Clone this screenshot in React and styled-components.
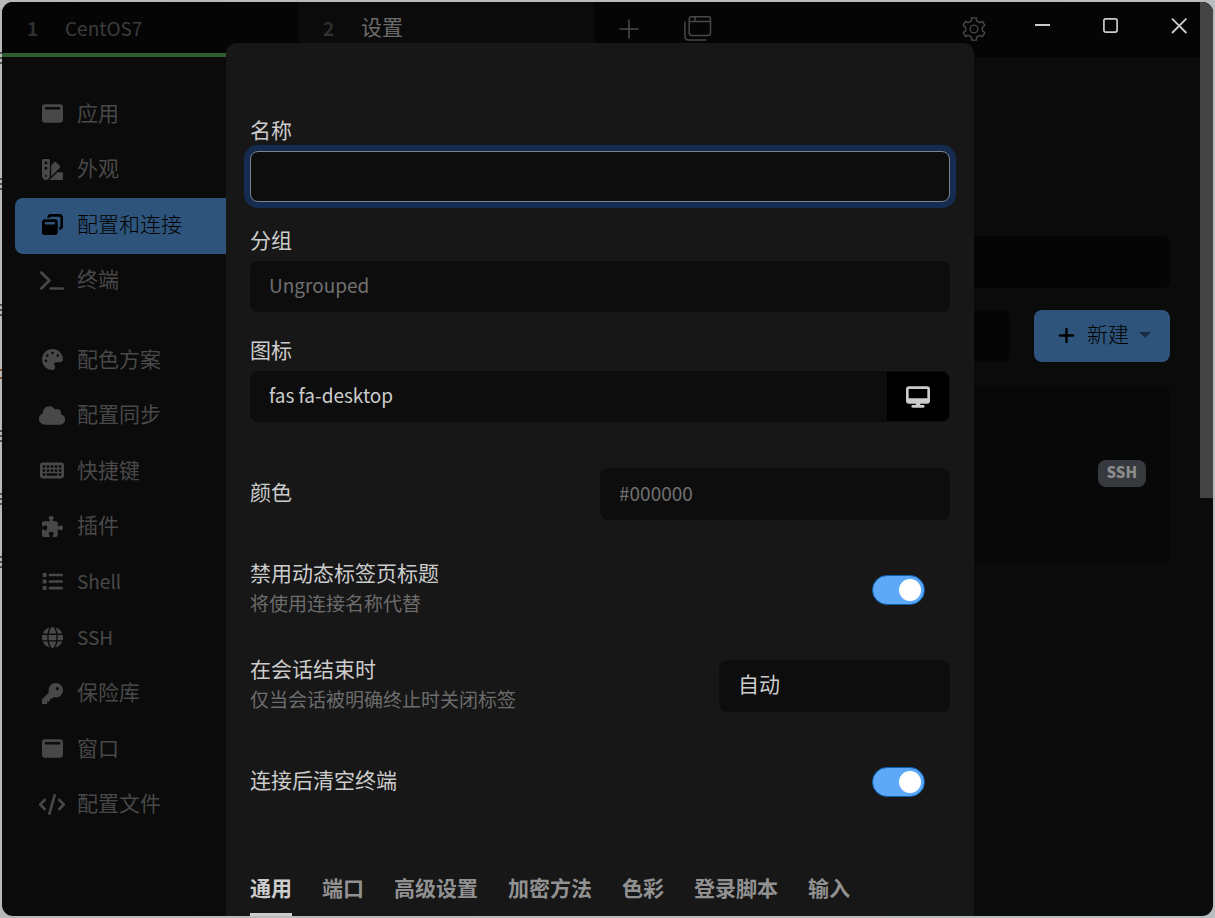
import React, { useState } from "react";
import styled, { createGlobalStyle, css } from "styled-components";
import {
  FaWindowMaximize,
  FaSwatchbook,
  FaWindowRestore,
  FaTerminal,
  FaPalette,
  FaCloud,
  FaKeyboard,
  FaPuzzlePiece,
  FaList,
  FaGlobe,
  FaKey,
  FaCode,
  FaDesktop,
  FaPlus,
} from "react-icons/fa6";

const GlobalStyle = createGlobalStyle`
  *, *::before, *::after { box-sizing: border-box; }
  body { margin: 0; }
  body, button, input, select {
    font-family: "Noto Sans CJK SC", "Noto Sans", sans-serif;
    font-size: 21px;
  }
  button { border: 0; padding: 0; background: none; cursor: pointer; }
`;

const edgeMarks = [52, 57, 62, 178, 183, 188, 304, 309, 314, 430, 435, 440, 493, 498, 503, 556, 561, 566]
  .map((y) => `linear-gradient(#555, #555) 0 ${y}px / 2px 2px no-repeat`)
  .join(", ");

const Desktop = styled.div`
  height: 100vh;
  padding: 2px;
  display: flex;
  background:
    ${edgeMarks},
    linear-gradient(#8a5a20, #8a5a20) 0 369px / 2px 2px no-repeat,
    linear-gradient(#8a5a20, #8a5a20) 0 377px / 2px 2px no-repeat,
    linear-gradient(90deg, #b9b9b9, #b9bdbf);
`;

const Window = styled.div`
  position: relative;
  flex: 1;
  display: flex;
  flex-direction: column;
  min-width: 0;
  border-radius: 11px;
  overflow: hidden;
  background: #0b0b0b;
`;

const TitleBar = styled.header`
  display: flex;
  flex: none;
  height: 55px;
  background: #050505;
`;

const TabButton = styled.button`
  display: flex;
  align-items: center;
  width: 296px;
  padding: 0 0 0 25px;
  text-align: left;
  font-size: 19px;
  color: ${(p) => (p.$active ? "#6b6b6b" : "#3c3c3c")};
  background: ${(p) => (p.$active ? "#0b0b0b" : "transparent")};
  border-bottom: 4px solid ${(p) => (p.$active ? "#0b0b0b" : "#2f5d31")};
`;

const TabNumber = styled.b`
  width: 38px;
  font-size: 19px;
  font-weight: 700;
  color: #303030;
`;

const BarActions = styled.div`
  display: flex;
  flex: 1;
  align-items: center;
  padding: 0 205px 2px 0;
`;

const BarButton = styled.button`
  display: flex;
  align-items: center;
  justify-content: center;
  width: 69px;
  height: 50px;
  color: #484848;
  margin-left: ${(p) => (p.$end ? "auto" : 0)};
`;

const WindowControls = styled.div`
  position: absolute;
  z-index: 3;
  top: 0;
  right: 0;
  display: flex;
`;

const ControlButton = styled.button`
  display: flex;
  align-items: center;
  justify-content: center;
  width: 68px;
  height: 47px;
  color: #ccc;
`;

const Body = styled.div`
  flex: 1;
  display: flex;
  min-height: 0;
`;

const Sidebar = styled.nav`
  flex: none;
  width: 250px;
  padding: 30px 0 0 13px;
`;

const NavGroup = styled.div`
  display: grid;
  grid-auto-rows: 1fr;
  height: ${(p) => p.$height}px;
  margin-bottom: 24px;
`;

const NavLink = styled.a`
  display: flex;
  align-items: center;
  gap: 12px;
  padding: 0 24px 2px;
  border-radius: 8px;
  text-decoration: none;
  font-weight: ${(p) => (p.$active ? 300 : 400)};
  color: ${(p) => (p.$active ? "#000" : "#484848")};
  background: ${(p) => (p.$active ? "#2e547b" : "transparent")};
`;

const NavIcon = styled.span`
  display: flex;
  justify-content: center;
  flex: none;
  width: 26px;
  svg { flex: none; width: ${(p) => p.$width || 21}px; height: 21px; }
`;

const NavText = styled.span`
  font-size: ${(p) => (p.$latin ? 19 : 21)}px;
  line-height: 30px;
  padding-bottom: ${(p) => (p.$latin ? 2 : 4)}px;
`;

const Main = styled.main`
  flex: 1;
  display: flex;
  flex-direction: column;
  gap: 22px;
  padding: 179px 43px 0 24px;
`;

const MainField = styled.input`
  flex: ${(p) => (p.$grow ? "1" : "none")};
  min-width: 0;
  height: 52px;
  border: 0;
  border-radius: 8px;
  background: #050505;
`;

const FilterRow = styled.div`
  display: flex;
  gap: 24px;
`;

const NewButton = styled.button`
  display: flex;
  align-items: center;
  width: 136px;
  height: 52px;
  padding: 0 19px 2px 23px;
  border-radius: 8px;
  background: #2e547b;
  color: #000;
  font-weight: 300;
  svg { width: 19px; height: 19px; margin-right: 11px; }
`;

const Caret = styled.span`
  margin-left: auto;
  border: 6px solid transparent;
  border-top-color: #182d44;
  border-bottom: 0;
`;

const ProfileCard = styled.section`
  display: flex;
  align-items: center;
  justify-content: flex-end;
  height: 176px;
  margin-top: 2px;
  padding: 0 24px 2px 0;
  border-radius: 8px;
  background: #080808;
`;

const Badge = styled.span`
  padding: 0 9px 3px;
  border-radius: 8px;
  background: #36393d;
  color: #8c8c8c;
  font-size: 15px;
  font-weight: 900;
  line-height: 24px;
`;

const ScrollThumb = styled.div`
  position: absolute;
  z-index: 4;
  top: 0;
  right: 0;
  width: 13px;
  height: 496px;
  background: #444;
`;

const Backdrop = styled.div`
  position: absolute;
  z-index: 2;
  inset: 41px 15px 0 0;
  display: flex;
  justify-content: center;
`;

const Dialog = styled.form`
  width: 100%;
  max-width: 748px;
  padding: 73px 24px 0;
  overflow: auto;
  scrollbar-width: none;
  border-radius: 10px 10px 0 0;
  background: #171717;
  color: #ccc;
`;

const FormGroup = styled.div`
  margin-bottom: 24px;
`;

const Label = styled.label`
  display: block;
  line-height: 31px;
  ${(p) => p.$above && css`margin-top: -2px; padding-bottom: 6px;`}
`;

const boxStyle = css`
  height: ${(p) => p.$height || 51}px;
  width: ${(p) => p.$width || "100%"};
  padding: 0 18px 4px;
  border: 1px solid #0e0e0e;
  border-radius: 8px;
  background: #0d0d0d;
  color: #ccc;
  font-size: 19px;
  outline: none;
  &::placeholder { color: #707070; opacity: 1; }
`;

const TextInput = styled.input`
  ${boxStyle}
  display: block;
  ${(p) => p.$focused && css`
    border-color: #7b8288;
    box-shadow: 0 0 0 6px #152c50;
  `}
`;

const SelectInput = styled.select`
  ${boxStyle}
  font-size: 21px;
  padding-bottom: 7px;
  appearance: none;
`;

const InputGroup = styled.div`
  display: flex;
  height: 51px;
  border: 1px solid #0d0d0d;
  border-radius: 8px;
  overflow: hidden;
  background: #0d0d0d;
`;

const GroupInput = styled.input`
  flex: 1;
  min-width: 0;
  padding: 0 18px 4px;
  border: 0;
  outline: none;
  background: transparent;
  color: #ccc;
  font-size: 19px;
`;

const GroupIcon = styled.span`
  display: flex;
  align-items: center;
  justify-content: center;
  width: 62px;
  background: #000;
  svg { width: 24px; height: 22px; }
`;

const FormLine = styled.div`
  display: flex;
  align-items: center;
  justify-content: space-between;
  height: 96px;
`;

const LineText = styled.div`
  padding-bottom: 5px;
`;

const Description = styled.p`
  margin: 0;
  font-size: 19px;
  line-height: 30px;
  color: #6c6c6c;
`;

const Toggle = styled.input`
  appearance: none;
  display: flex;
  align-items: center;
  justify-content: flex-end;
  flex: none;
  width: 53px;
  height: 30px;
  margin: 0 25px 0 0;
  padding: 3px;
  border: 1px solid #0c5db0;
  border-radius: 15px;
  background: #5ea9f7;
  &::before {
    content: "";
    width: 22px;
    height: 22px;
    border-radius: 50%;
    background: #fff;
  }
  &:not(:checked) { background: #222; justify-content: flex-start; }
`;

const TabList = styled.div`
  display: flex;
  gap: 30px;
  margin-top: 41px;
`;

const DialogTab = styled.button`
  height: 46px;
  padding-bottom: 10px;
  line-height: 32px;
  font-weight: 700;
  white-space: nowrap;
  color: ${(p) => (p.$active ? "#ccc" : "#919191")};
  border-bottom: 4px solid ${(p) => (p.$active ? "#ccc" : "transparent")};
`;

const round = (n) => Math.round(n * 100) / 100;
const gearPath =
  [0, 60, 120, 180, 240, 300]
    .flatMap((angle) =>
      [[-25, 8.4], [-17, 8.6], [-12, 11.4], [12, 11.4], [17, 8.6], [25, 8.4]].map(([offset, radius]) => {
        const a = ((angle + offset - 90) * Math.PI) / 180;
        return `${round(12 + radius * Math.cos(a))} ${round(12 + radius * Math.sin(a))}`;
      })
    )
    .reduce((d, point, i) => d + (i ? "L" : "M") + point, "") + "Z";

const GearIcon = () => (
  <svg width="24" height="24" viewBox="0 0 24 24" fill="none" stroke="currentColor" strokeWidth="1.4" strokeLinejoin="round">
    <path d={gearPath} />
    <circle cx="12" cy="12" r="3.9" />
  </svg>
);

const PlusIcon = () => (
  <svg width="20" height="20" viewBox="0 0 20 20" fill="none" stroke="currentColor" strokeWidth="1.6">
    <path d="M10 0.5V19.5M0.5 10H19.5" />
  </svg>
);

const ProfilesIcon = () => (
  <svg width="28" height="25" viewBox="0 0 28 25" fill="none" stroke="currentColor" strokeWidth="1.5">
    <rect x="5.2" y="0.8" width="21.3" height="18.6" rx="2.6" />
    <path d="M5.2 5.6H26.5M11 0.8V5.6M0.9 5.5V20.2Q0.9 24 4.7 24H22.5" />
  </svg>
);

const MinimizeIcon = () => (
  <svg width="16" height="16" viewBox="0 0 16 16" stroke="currentColor" strokeWidth="2">
    <path d="M0 7H15" />
  </svg>
);

const MaximizeIcon = () => (
  <svg width="16" height="16" viewBox="0 0 16 16" fill="none" stroke="currentColor" strokeWidth="1.7">
    <rect x="0.9" y="0.9" width="13.2" height="13.2" rx="2" />
  </svg>
);

const CloseIcon = () => (
  <svg width="16" height="16" viewBox="0 0 16 16" stroke="currentColor" strokeWidth="1.8">
    <path d="M1 0.6L15.4 15M15.4 0.6L1 15" />
  </svg>
);

const generalPages = [
  ["应用", FaWindowMaximize],
  ["外观", FaSwatchbook],
  ["配置和连接", FaWindowRestore],
  ["终端", FaTerminal, 24],
];

const pluginPages = [
  ["配色方案", FaPalette],
  ["配置同步", FaCloud, 26],
  ["快捷键", FaKeyboard, 24],
  ["插件", FaPuzzlePiece],
  ["Shell", FaList],
  ["SSH", FaGlobe],
  ["保险库", FaKey],
  ["窗口", FaWindowMaximize],
  ["配置文件", FaCode, 26],
];

const dialogTabs = ["通用", "端口", "高级设置", "加密方法", "色彩", "登录脚本", "输入"];

const NavItems = ({ items, height }) => (
  <NavGroup $height={height}>
    {items.map(([name, Icon, width]) => (
      <NavLink key={name} href="#" $active={name === "配置和连接"}>
        <NavIcon $width={width}><Icon preserveAspectRatio="xMidYMid slice" /></NavIcon>
        <NavText $latin={/^[A-Z]/.test(name)}>{name}</NavText>
      </NavLink>
    ))}
  </NavGroup>
);

export default function App() {
  const [tab, setTab] = useState("通用");
  return (
    <>
      <GlobalStyle />
      <Desktop>
        <Window>
          <TitleBar>
            <TabButton><TabNumber>1</TabNumber>CentOS7</TabButton>
            <TabButton $active><TabNumber>2</TabNumber><NavText>设置</NavText></TabButton>
            <BarActions>
              <BarButton aria-label="新标签页"><PlusIcon /></BarButton>
              <BarButton aria-label="配置和连接"><ProfilesIcon /></BarButton>
              <BarButton $end aria-label="设置"><GearIcon /></BarButton>
            </BarActions>
          </TitleBar>
          <WindowControls>
            <ControlButton aria-label="最小化"><MinimizeIcon /></ControlButton>
            <ControlButton aria-label="最大化"><MaximizeIcon /></ControlButton>
            <ControlButton aria-label="关闭"><CloseIcon /></ControlButton>
          </WindowControls>
          <Body>
            <Sidebar>
              <NavItems items={generalPages} height={222} />
              <NavItems items={pluginPages} height={500} />
            </Sidebar>
            <Main>
              <MainField aria-label="默认配置" />
              <FilterRow>
                <MainField $grow aria-label="筛选" />
                <NewButton><FaPlus /><NavText>新建</NavText><Caret /></NewButton>
              </FilterRow>
              <ProfileCard><Badge>SSH</Badge></ProfileCard>
            </Main>
          </Body>
          <Backdrop>
            <Dialog onSubmit={(e) => e.preventDefault()}>
              <FormGroup>
                <Label $above htmlFor="name">名称</Label>
                <TextInput id="name" $focused />
              </FormGroup>
              <FormGroup>
                <Label $above htmlFor="group">分组</Label>
                <TextInput id="group" placeholder="Ungrouped" />
              </FormGroup>
              <FormGroup>
                <Label $above htmlFor="icon">图标</Label>
                <InputGroup>
                  <GroupInput id="icon" defaultValue="fas fa-desktop" />
                  <GroupIcon><FaDesktop /></GroupIcon>
                </InputGroup>
              </FormGroup>
              <FormLine>
                <LineText><Label htmlFor="color">颜色</Label></LineText>
                <TextInput id="color" placeholder="#000000" $width="50%" $height={52} />
              </FormLine>
              <FormLine>
                <LineText>
                  <Label htmlFor="title">禁用动态标签页标题</Label>
                  <Description>将使用连接名称代替</Description>
                </LineText>
                <Toggle type="checkbox" id="title" defaultChecked />
              </FormLine>
              <FormLine>
                <LineText>
                  <Label htmlFor="end">在会话结束时</Label>
                  <Description>仅当会话被明确终止时关闭标签</Description>
                </LineText>
                <SelectInput id="end" $width="33%" $height={52}>
                  <option>自动</option>
                </SelectInput>
              </FormLine>
              <FormLine>
                <LineText><Label htmlFor="clear">连接后清空终端</Label></LineText>
                <Toggle type="checkbox" id="clear" defaultChecked />
              </FormLine>
              <TabList role="tablist">
                {dialogTabs.map((name) => (
                  <DialogTab key={name} type="button" role="tab" $active={tab === name} onClick={() => setTab(name)}>
                    {name}
                  </DialogTab>
                ))}
              </TabList>
            </Dialog>
          </Backdrop>
          <ScrollThumb />
        </Window>
      </Desktop>
    </>
  );
}
